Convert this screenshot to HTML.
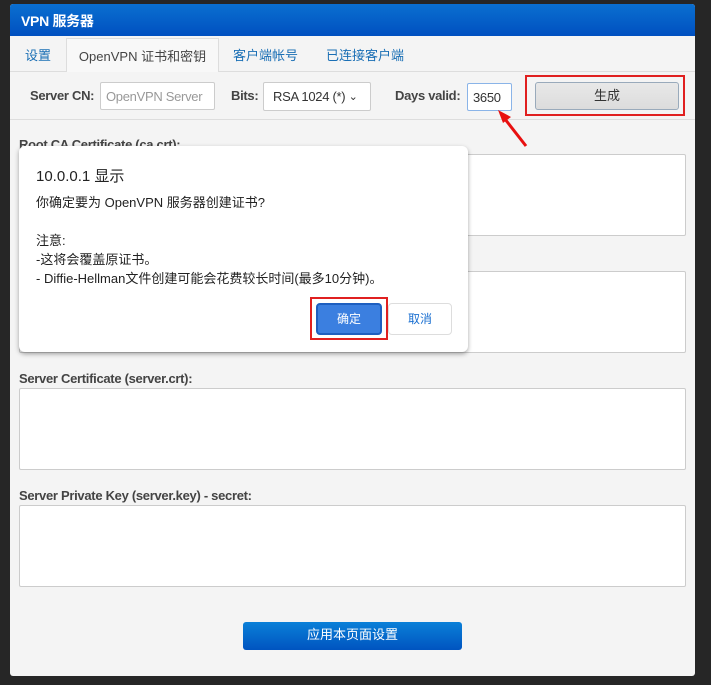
<!DOCTYPE html>
<html><head><meta charset="utf-8"><style>
*{box-sizing:border-box;margin:0;padding:0}
body{width:711px;height:685px;background:#262626;position:relative;overflow:hidden;font-family:"Liberation Sans","Noto Sans CJK SC",sans-serif;font-size:13px;color:#333}
.a{position:absolute}
#panel{left:10px;top:4px;width:685px;height:672px;background:#f4f4f4;border-radius:3px;overflow:hidden}
#hdr{left:0;top:0;width:685px;height:32px;background:linear-gradient(#0a6fd0,#0050c0);color:#fff;font-weight:bold;font-size:14px;padding:7px 11px;letter-spacing:-0.3px}
#tabs{left:0;top:32px;width:685px;height:36px;background:#f4f4f4;border-bottom:1px solid #ddd}
.tab{position:absolute;top:9px;color:#1a6fb5;font-size:13px}
#act{left:56px;top:2px;width:153px;height:35px;background:#f8f8f8;border:1px solid #ddd;border-bottom:none;color:#444;padding-top:7px;text-align:center;font-size:13px}
#form{left:0;top:68px;width:685px;height:48px;background:#f4f4f4;border-bottom:1px solid #ddd}
.lbl{position:absolute;font-weight:bold;color:#444;letter-spacing:-0.3px}
.inp{position:absolute;background:#fff;border:1px solid #ccc;border-radius:2px;font-size:13px;padding:0 5px;letter-spacing:-0.3px;display:flex;align-items:center}
.ta{position:absolute;left:9px;width:667px;height:82px;background:#fff;border:1px solid #ccc;border-radius:2px}
</style></head><body>
<div id="panel" class="a">
<div id="hdr" class="a">VPN 服务器</div>
<div id="tabs" class="a">
<span class="tab" style="left:15px">设置</span>
<div id="act" class="a">OpenVPN 证书和密钥</div>
<span class="tab" style="left:223px">客户端帐号</span>
<span class="tab" style="left:316px">已连接客户端</span>
</div>
<div id="form" class="a">
<span class="lbl" style="left:20px;top:16px">Server CN:</span>
<div class="inp" style="left:90px;top:10px;width:115px;height:28px;color:#999">OpenVPN Server</div>
<span class="lbl" style="left:221px;top:16px">Bits:</span>
<div class="inp" style="left:253px;top:10px;width:108px;height:29px;padding-left:9px">RSA 1024 (*)&nbsp;<span style="font-size:11px">&#8964;</span></div>
<span class="lbl" style="left:385px;top:16px">Days valid:</span>
<div class="inp" style="left:457px;top:11px;width:45px;height:28px;border-color:#8ab4e8">3650</div>
<div class="a" style="left:515px;top:3px;width:160px;height:41px;border:2px solid #e02020"></div>
<div class="a" style="left:525px;top:10px;width:144px;height:28px;background:linear-gradient(#e8e8e8,#dcdcdc);border:1px solid #9ab;border-radius:3px;text-align:center;line-height:25px;color:#333">生成</div>
</div>
<span class="lbl" style="left:9px;top:133px">Root CA Certificate (ca.crt):</span>
<div class="ta" style="top:150px"></div>
<div class="ta" style="top:267px"></div>
<span class="lbl" style="left:9px;top:367px">Server Certificate (server.crt):</span>
<div class="ta" style="top:384px"></div>
<span class="lbl" style="left:9px;top:484px">Server Private Key (server.key) - secret:</span>
<div class="ta" style="top:501px"></div>
<div class="a" style="left:233px;top:618px;width:219px;height:28px;background:linear-gradient(#0a80d8,#0054c0);border-radius:3px;color:#fff;text-align:center;line-height:26px;font-size:13px">应用本页面设置</div>
</div>
<svg class="a" style="left:495px;top:108px" width="40" height="42"><path d="M31 38 L6 6" stroke="#e81010" stroke-width="3"/><path d="M3 2 L16 9 L8 15 Z" fill="#e81010"/></svg>
<div class="a" style="left:19px;top:146px;width:449px;height:206px;background:#fff;border-radius:6px;box-shadow:0 2px 5px rgba(0,0,0,.35)">
<div class="a" style="left:17px;top:19px;font-size:15px;color:#222">10.0.0.1 显示</div>
<div class="a" style="left:17px;top:47px;font-size:13px;color:#222;line-height:19px">你确定要为 OpenVPN 服务器创建证书?<br><br>注意:<br>-这将会覆盖原证书。<br>- Diffie-Hellman文件创建可能会花费较长时间(最多10分钟)。</div>
<div class="a" style="left:291px;top:151px;width:78px;height:43px;border:2px solid #e02020"></div>
<div class="a" style="left:297px;top:157px;width:66px;height:32px;background:#3b7fe0;border:2px solid #1e5fc0;border-radius:4px;color:#fff;text-align:center;line-height:28px;font-size:12px">确定</div>
<div class="a" style="left:369px;top:157px;width:64px;height:32px;background:#fff;border:1px solid #ddd;border-radius:4px;color:#1a6fd0;text-align:center;line-height:30px;font-size:12px">取消</div>
</div>
</body></html>
